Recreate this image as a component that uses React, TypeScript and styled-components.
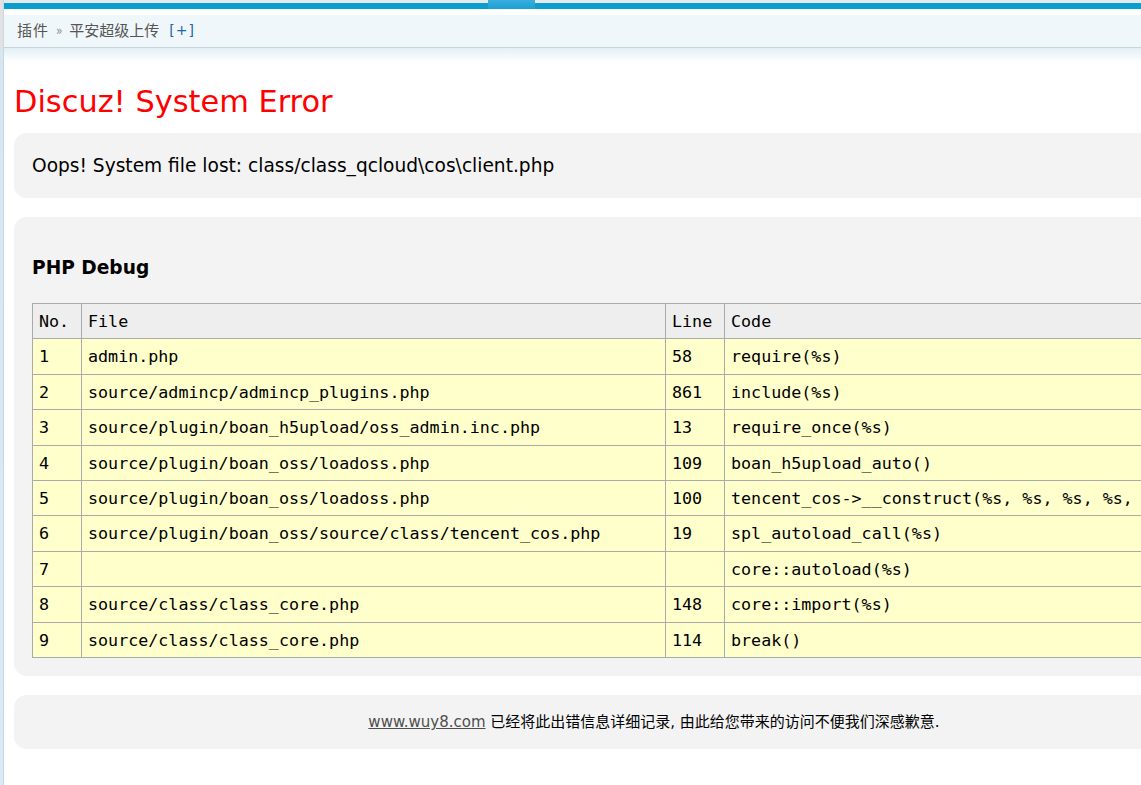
import styled, { createGlobalStyle } from "styled-components";

const GlobalStyle = createGlobalStyle`
  html, body {
    margin: 0;
    padding: 0;
    background: #ffffff;
    overflow: hidden;
  }
  body {
    font-family: "DejaVu Sans", Verdana, "Noto Sans CJK SC", sans-serif;
    color: #000;
  }
`;

const Page = styled.div`
  display: flex;
  width: 1141px;
  height: 785px;
  overflow: hidden;
`;

const LeftRail = styled.div`
  flex: 0 0 3px;
  background: linear-gradient(to bottom, #e2e2e2 0, #e2e2e2 48px, #d6e6f2 49px, #dceaf4 100%);
  border-right: 1px solid #c9d9e4;
`;

const Frame = styled.div`
  flex: 1;
  display: flex;
  flex-direction: column;
  min-width: 0;
`;

const TopStrip = styled.div`
  display: flex;
  height: 9px;
`;

const StripSegment = styled.div<{ $width?: number }>`
  flex: ${(p) => (p.$width ? `0 0 ${p.$width}px` : "1")};
  border-top: 3px solid #e6e8ea;
  background: #0a9dd0;
`;

const ActiveTab = styled.div`
  flex: 0 0 47px;
  background: linear-gradient(to bottom, #3aaede, #1b9fd2);
`;

const Breadcrumb = styled.div`
  margin-top: 6px;
  height: 33px;
  box-sizing: border-box;
  padding: 0 0 3px 13px;
  display: flex;
  align-items: center;
  gap: 6px;
  background: #f0f7fa;
  border-bottom: 1px solid #c5d5de;
  font-family: "Noto Sans CJK SC", sans-serif;
  font-size: 15px;
  color: #555;
`;

const Crumb = styled.span<{ $spaced?: boolean }>`
  letter-spacing: ${(p) => (p.$spaced ? "1px" : "0")};
`;

const Sep = styled.span`
  color: #8a8a8a;
  font-size: 13px;
  margin: 0 1px;
`;

const AddLink = styled.span`
  color: #2366a8;
  margin-left: 4px;
  font-family: "DejaVu Sans", sans-serif;
  font-size: 14px;
  letter-spacing: 1px;
`;

const HeaderShade = styled.div`
  height: 14px;
  background: linear-gradient(to bottom, #e3eff6, #ffffff);
`;

const Content = styled.div`
  padding: 0 0 0 10px;
  width: 1280px;
`;

const Title = styled.h1`
  margin: 22px 0 14px;
  color: #ff0000;
  font-family: "DejaVu Sans", Verdana, sans-serif;
  font-weight: normal;
  font-size: 30.4px;
  line-height: 35px;
`;

const InfoBox = styled.div`
  background: #f3f3f3;
  border-radius: 12.5px;
  padding: 18px;
  margin-bottom: 19px;
  font-size: 18.6px;
  line-height: 29px;
`;

const Heading = styled.p`
  margin: 18px 0 21px;
  font-weight: bold;
`;

const Table = styled.table`
  table-layout: fixed;
  width: 1244px;
  background: #aaaaaa;
  border-spacing: 1px;
  font-family: "DejaVu Sans Mono", Consolas, monospace;
  font-size: 16.7px;
`;

const Row = styled.tr<{ $head?: boolean }>`
  background: ${(p) => (p.$head ? "#eeeeee" : "#ffffcc")};
`;

const Cell = styled.td`
  padding: 6px;
  line-height: 22.4px;
  white-space: nowrap;
  overflow: hidden;
`;

const HelpBox = styled.div`
  background: #f3f3f3;
  border-radius: 12.5px;
  padding: 15px;
  text-align: center;
  font-family: "DejaVu Sans", "Noto Sans CJK SC", sans-serif;
  font-size: 15px;
  line-height: 24px;
`;

const SiteLink = styled.a`
  color: #4e4e4e;
  text-decoration: underline;
`;

const rows: [string, string, string, string][] = [
  ["1", "admin.php", "58", "require(%s)"],
  ["2", "source/admincp/admincp_plugins.php", "861", "include(%s)"],
  ["3", "source/plugin/boan_h5upload/oss_admin.inc.php", "13", "require_once(%s)"],
  ["4", "source/plugin/boan_oss/loadoss.php", "109", "boan_h5upload_auto()"],
  ["5", "source/plugin/boan_oss/loadoss.php", "100", "tencent_cos->__construct(%s, %s, %s, %s, %s)"],
  ["6", "source/plugin/boan_oss/source/class/tencent_cos.php", "19", "spl_autoload_call(%s)"],
  ["7", "", "", "core::autoload(%s)"],
  ["8", "source/class/class_core.php", "148", "core::import(%s)"],
  ["9", "source/class/class_core.php", "114", "break()"],
];

export default function App() {
  return (
    <>
      <GlobalStyle />
      <Page>
        <LeftRail />
        <Frame>
          <TopStrip>
            <StripSegment $width={484} />
            <ActiveTab />
            <StripSegment />
          </TopStrip>
          <Breadcrumb>
            <Crumb $spaced>插件</Crumb>
            <Sep>»</Sep>
            <Crumb>平安超级上传</Crumb>
            <AddLink>[+]</AddLink>
          </Breadcrumb>
          <HeaderShade />
          <Content>
            <Title>Discuz! System Error</Title>
            <InfoBox>Oops! System file lost: class/class_qcloud\cos\client.php</InfoBox>
            <InfoBox>
              <Heading>PHP Debug</Heading>
              <Table>
                <colgroup>
                  <col style={{ width: 48 }} />
                  <col style={{ width: 583 }} />
                  <col style={{ width: 58 }} />
                  <col />
                </colgroup>
                <tbody>
                  <Row $head>
                    <Cell>No.</Cell>
                    <Cell>File</Cell>
                    <Cell>Line</Cell>
                    <Cell>Code</Cell>
                  </Row>
                  {rows.map((r) => (
                    <Row key={r[0]}>
                      {r.map((c, i) => (
                        <Cell key={i}>{c}</Cell>
                      ))}
                    </Row>
                  ))}
                </tbody>
              </Table>
            </InfoBox>
            <HelpBox>
              <SiteLink href="#">www.wuy8.com</SiteLink> 已经将此出错信息详细记录, 由此给您带来的访问不便我们深感歉意.
            </HelpBox>
          </Content>
        </Frame>
      </Page>
    </>
  );
}
